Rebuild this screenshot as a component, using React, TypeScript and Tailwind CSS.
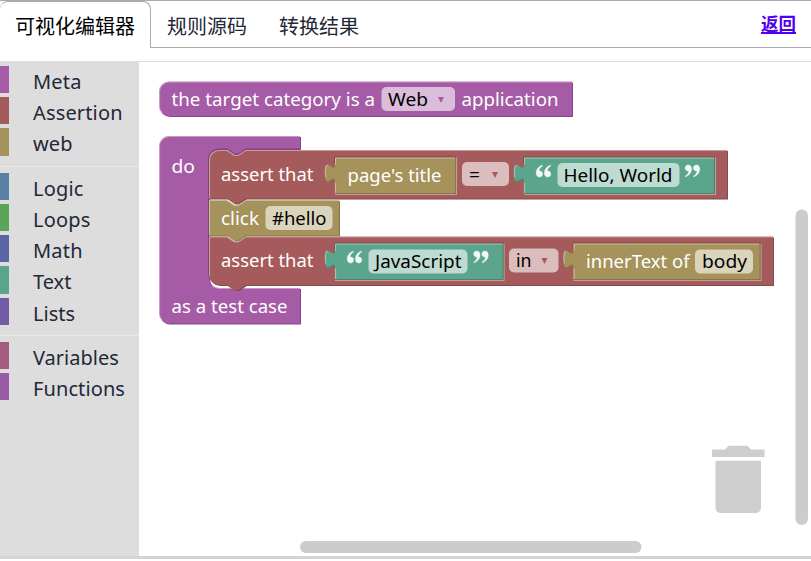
import React from 'react';

const PURPLE = '#a55ba5';
const RED = '#a55b5b';
const OLIVE = '#a5935b';
const TEAL = '#5ba58c';

type Category = { name: string; bar: string; track: string };

const groups: Category[][] = [
  [
    { name: 'Meta', bar: 'bg-[#a55ba5]', track: 'tracking-[0.2px]' },
    { name: 'Assertion', bar: 'bg-[#a55b5b]', track: 'tracking-[0.15px]' },
    { name: 'web', bar: 'bg-[#a5935b]', track: 'tracking-[0.1px]' },
  ],
  [
    { name: 'Logic', bar: 'bg-[#5b80a5]', track: 'tracking-[0.2px]' },
    { name: 'Loops', bar: 'bg-[#5ba55b]', track: 'tracking-[0.2px]' },
    { name: 'Math', bar: 'bg-[#5b67a5]', track: 'tracking-[0.2px]' },
    { name: 'Text', bar: 'bg-[#5ba58c]', track: 'tracking-normal' },
    { name: 'Lists', bar: 'bg-[#745ba5]', track: 'tracking-normal' },
  ],
  [
    { name: 'Variables', bar: 'bg-[#a55b80]', track: 'tracking-normal' },
    { name: 'Functions', bar: 'bg-[#995ba5]', track: 'tracking-[0.1px]' },
  ],
];

function Toolbox() {
  return (
    <nav className="w-[139px] shrink-0 bg-[#ddd] pt-[5px] font-['Noto_Sans',sans-serif] text-[20px] leading-[27px] text-[#1f2937]">
      {groups.map((group, i) => (
        <div key={i} className={i > 0 ? 'mt-[6.3px] border-t border-[#e8e8e8] pt-[6px]' : ''}>
          {group.map((c) => (
            <div key={c.name} className="flex h-[31.2px] items-start">
              <span className={`h-[27.2px] w-[9px] ${c.bar}`} />
              <span className={`ml-6 mt-[2px] whitespace-nowrap ${c.track}`}>{c.name}</span>
            </div>
          ))}
        </div>
      ))}
    </nav>
  );
}

/** A block body with its shadow edge and its lit edge. */
function Shape({ d, light, fill, dark }: { d: string; light: string; fill: string; dark: string }) {
  return (
    <g>
      <path d={d} fill={dark} transform="translate(1 1)" />
      <path d={d} fill={fill} />
      <path d={light} fill="none" stroke="#fff" strokeOpacity=".38" strokeWidth="1.2" />
    </g>
  );
}

const NOTCH = 'h18l7.5 5h3.75l7.5 -5';

function Statement({ y, right, bottom, fill, dark, round, roundBottom }: { y: number; right: number; bottom: number; fill: string; dark: string; round?: boolean; roundBottom?: boolean }) {
  const top = round ? `M209 ${y + 10}a10 10 0 0 1 10 -10h8l7.5 5h3.75l7.5 -5` : `M209 ${y}${NOTCH}`;
  const end = roundBottom ? `H219a10 10 0 0 1 -10 -10Z` : 'H209Z';
  return (
    <Shape
      d={`${top}H${right}V${bottom}H245.75l-7.5 5h-3.75l-7.5 -5${end}`}
      light={`M209.5 ${bottom - (roundBottom ? 9 : 0)}V${y + (round ? 10 : 0.5)}${round ? 'a9.5 9.5 0 0 1 9.5 -9.5h8' : 'h17.5'}l7.5 5h3.75l7.5 -5H${right}`}
      fill={fill}
      dark={dark}
    />
  );
}

function Value({ x, y, right, fill, dark }: { x: number; y: number; right: number; fill: string; dark: string }) {
  const b = y + 35.5;
  return (
    <g>
      <path d={`M${x} ${b + 1.5}H${right + 1.5}V${y}`} fill="none" stroke="#c69b9b" strokeWidth="1.2" />
      <path d={`M${x - 0.5} ${y + 6}V${y - 0.5}H${right + 1}`} fill="none" stroke="#7d4545" />
      <Shape
        d={`M${x} ${y}H${right}V${b}H${x}V${y + 25}c0 -12.5 -10 10 -10 -9.4s10 3.1 10 -9.4Z`}
        light={`M${x + 0.5} ${b}V${y + 25}M${x - 9} ${y + 20}c-1.5 -6 -.5 -13 1.5 -12M${x + 0.5} ${y + 7}V${y + 0.5}H${right}`}
        fill={fill}
        dark={dark}
      />
    </g>
  );
}

function Label({ x, y, w, children, dark }: { x: number; y: number; w: number; children: string; dark?: boolean }) {
  return (
    <text x={x} y={y} textLength={w} lengthAdjust="spacingAndGlyphs" fill={dark ? '#000' : '#fff'} className="font-['Noto_Sans',sans-serif] text-[18px]">
      {children}
    </text>
  );
}

function Field({ x, y, w }: { x: number; y: number; w: number }) {
  return <rect x={x} y={y} width={w} height="24" rx="5" fill="#fff" fillOpacity=".6" />;
}

function Arrow({ x, y, fill }: { x: number; y: number; fill: string }) {
  return <path d={`M${x} ${y}h6l-3 6Z`} fill={fill} />;
}

function Quote({ x, y, close }: { x: number; y: number; close?: boolean }) {
  const mark = 'M6.2 .2C2.8 1.2 .2 4.3 .2 7.9C.2 10.4 1.6 12 3.5 12C5.3 12 6.6 10.7 6.6 8.9C6.6 7.2 5.4 6 3.7 6C3.4 6 3.1 6 2.9 6.1C3.3 3.8 4.5 2.1 6.6 1Z';
  return (
    <g transform={close ? `translate(${x + 15} ${y + 12}) rotate(180)` : `translate(${x} ${y})`} fill="#fff" fillOpacity=".92" stroke="#fff" strokeOpacity=".6" strokeWidth=".6">
      <path d={mark} />
      <path d={mark} transform="translate(8.2 0)" />
    </g>
  );
}

function Workspace() {
  return (
    <svg viewBox="139 62 672 494" width="672" height="494" className="block">
      <Shape
        d="M169 81.500H572V116H169a10 10 0 0 1 -10 -10V91.500a10 10 0 0 1 10 -10Z"
        light="M162 113a9.500 9.500 0 0 1 -2.500 -7V91.500a9.500 9.500 0 0 1 9.500 -9.500H572"
        fill={PURPLE}
        dark="#844984"
      />
      <Label x={171.500} y={106} w={203.500}>the target category is a</Label>
      <Field x={381.500} y={87} w={73.500} />
      <Label x={388} y={106} w={40} dark>Web</Label>
      <Arrow x={438} y={97} fill={PURPLE} />
      <Label x={461.500} y={106} w={97}>application</Label>

      <Shape
        d="M169 136H300V149.500H245.750l-7.500 5h-3.750l-7.500 -5H219a10 10 0 0 0 -10 10V278a10 10 0 0 0 10 10H300V323.500H169a10 10 0 0 1 -10 -10V146a10 10 0 0 1 10 -10Z"
        light="M162 320.500a9.500 9.500 0 0 1 -2.500 -7V146a9.500 9.500 0 0 1 9.500 -9.500H300M212 285.500a10 10 0 0 0 7 3H300"
        fill={PURPLE}
        dark="#844984"
      />
      <path d="M208.500 276V159a10 10 0 0 1 10 -10H227l7.500 5h3.750l7.500 -5H300" fill="none" stroke="#784278" />
      <Label x={171.500} y={172.500} w={23.500}>do</Label>
      <Label x={171.500} y={313} w={116}>as a test case</Label>

      <Statement y={150} right={727} bottom={198.500} fill={RED} dark="#844949" round />
      <Statement y={200} right={339} bottom={235.500} fill={OLIVE} dark="#847649" />
      <Statement y={236.500} right={773} bottom={285} fill={RED} dark="#844949" roundBottom />

      <Label x={221} y={181} w={92.500}>assert that</Label>
      <Value x={335} y={157.500} right={455} fill={OLIVE} dark="#847649" />
      <Label x={347.500} y={182} w={94}>page's title</Label>
      <Field x={462} y={162} w={47} />
      <Label x={469} y={181} w={11} dark>=</Label>
      <Arrow x={492} y={172} fill={RED} />
      <Value x={524} y={157.500} right={714} fill={TEAL} dark="#498470" />
      <Quote x={536} y={165} />
      <Field x={557.500} y={163} w={122} />
      <Label x={563.500} y={182} w={109} dark>Hello, World</Label>
      <Quote x={685} y={165} close />

      <Label x={221} y={225} w={38}>click</Label>
      <Field x={265.500} y={206} w={67} />
      <Label x={272} y={225} w={54.500} dark>#hello</Label>

      <Label x={221} y={267} w={92.500}>assert that</Label>
      <Value x={335} y={243.500} right={502.500} fill={TEAL} dark="#498470" />
      <Quote x={347} y={251} />
      <Field x={368.500} y={249.500} w={99} />
      <Label x={375} y={268} w={86.500} dark>JavaScript</Label>
      <Quote x={473.500} y={251} close />
      <Field x={509} y={248.500} w={49.500} />
      <Label x={516} y={267} w={15.500} dark>in</Label>
      <Arrow x={541.500} y={258} fill={RED} />
      <Value x={573.500} y={243.500} right={759.500} fill={OLIVE} dark="#847649" />
      <Label x={586} y={268} w={103.500}>innerText of</Label>
      <Field x={695} y={249.500} w={58} />
      <Label x={702} y={268} w={45} dark>body</Label>

      <g fill="#cecece">
        <path d="M712 449.500H725l3.500 -3.700h19l3.500 3.700H764.500V457H712Z" />
        <path d="M715.500 460.700H761V507.500a5.500 5.500 0 0 1 -5.500 5.500H721a5.500 5.500 0 0 1 -5.500 -5.500Z" />
      </g>
      <rect x="795.500" y="209.500" width="12.500" height="315.500" rx="6.250" fill="#ccc" />
      <rect x="300" y="541" width="341.500" height="12" rx="6" fill="#ccc" />
    </svg>
  );
}

export default function App() {
  return (
    <div className="flex h-[561px] w-[811px] flex-col overflow-hidden bg-white font-['Noto_Sans_CJK_SC',sans-serif]">
      <header className="flex h-12 border-t border-[#aaa] text-[20px] leading-[30px] text-[#1f2937]">
        <div className="w-[151px] rounded-t-lg border-r border-t border-[#aaa] pl-[15px] pt-[9px] text-black">可视化编辑器</div>
        <div className="flex flex-1 items-start border-b border-[#aaa] pt-[10px]">
          <span className="ml-4">规则源码</span>
          <span className="ml-8">转换结果</span>
          <a className="ml-auto mr-[15px] mt-[-3px] text-[17.5px] font-bold text-[#5000ee] underline decoration-2 underline-offset-2">返回</a>
        </div>
      </header>
      <main className="mt-[13px] flex h-[498px] border-b-[3px] border-[#d4d4d4]">
        <Toolbox />
        <section className="flex-1 border-t border-[#ddd]">
          <Workspace />
        </section>
      </main>
    </div>
  );
}
